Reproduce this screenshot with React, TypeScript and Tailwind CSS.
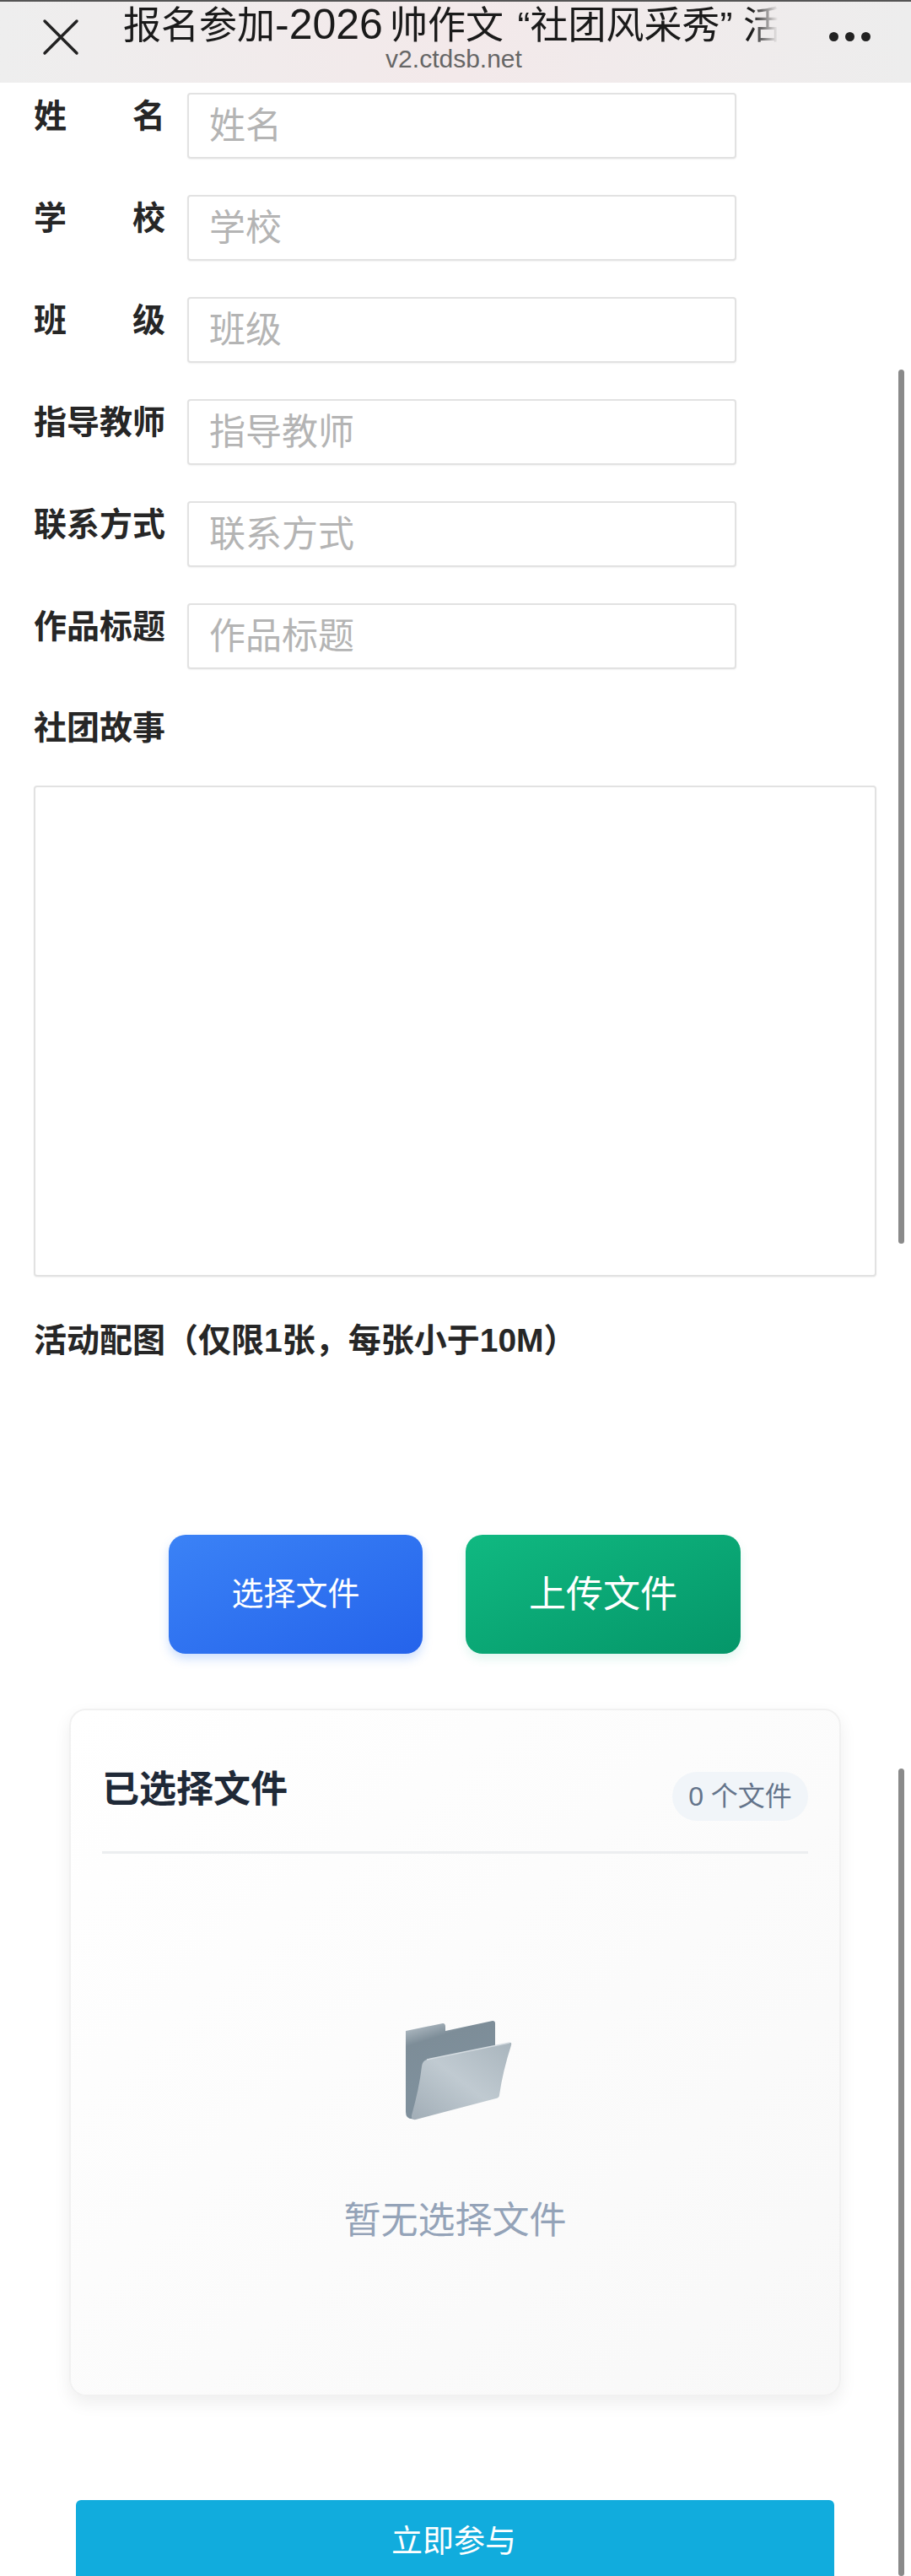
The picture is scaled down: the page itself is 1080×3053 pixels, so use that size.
import React from 'react'

const cjk = { fontFamily: '"Liberation Sans", "Noto Sans CJK SC", sans-serif' }

const fields = [
  { label: ['姓', '名'], placeholder: '姓名' },
  { label: ['学', '校'], placeholder: '学校' },
  { label: ['班', '级'], placeholder: '班级' },
  { label: ['指', '导', '教', '师'], placeholder: '指导教师' },
  { label: ['联', '系', '方', '式'], placeholder: '联系方式' },
  { label: ['作', '品', '标', '题'], placeholder: '作品标题' },
]

const FolderIcon = () => (
  <svg width="127" height="118" viewBox="0 0 127 118" fill="none">
    <defs>
      <linearGradient id="back" x1="0" y1="0" x2="0.2" y2="0.7">
        <stop offset="0" stopColor="#c3ccd3" />
        <stop offset="0.35" stopColor="#7d8d98" />
        <stop offset="1" stopColor="#7f909c" />
      </linearGradient>
      <linearGradient id="front" x1="0" y1="1" x2="1" y2="0">
        <stop offset="0" stopColor="#a1adb6" />
        <stop offset="0.5" stopColor="#c0cad1" />
        <stop offset="1" stopColor="#a9b5bd" />
      </linearGradient>
    </defs>
    <path d="M1 12 L45 3 Q48 3 48 7 L48 12 L104 0 Q107 0 107 3 L107 90 L12 116 Q1 118 1 108 Z" fill="url(#back)" />
    <path d="M26 46 L124 26 Q127 25 126 29 Q116 60 112 88 Q112 91 108 92 L13 117 Q7 118 8 112 Q17 80 20 54 Q21 47 26 46 Z" fill="url(#front)" />
    <path d="M26 46 L124 26" stroke="#d5dce1" strokeWidth="1.5" />
  </svg>
)

const App = () => {
  return (
    <div className="relative h-[3053px] w-[1080px] overflow-hidden bg-white text-[#262626]" style={cjk}>
      <header className="relative flex h-[98px] items-start border-t-2 border-[#555] bg-linear-to-r from-[#eeeeee] via-[#f3e9ea] to-[#ededed]">
        <svg className="ml-[50px] mt-[20px] shrink-0" width="44" height="44" viewBox="0 0 44 44" fill="none" stroke="#222" strokeWidth="3.5" strokeLinecap="round">
          <path d="M3 3 L41 41 M41 3 L3 41" />
        </svg>
        <div className="ml-[52px] flex w-[784px] flex-col items-center">
          <div className="mt-[2px] w-full overflow-hidden whitespace-nowrap text-[45px] leading-[50px] text-[#1a1a1a] [mask-image:linear-gradient(to_right,black_95%,transparent_99%)]">
            报名参加<span className="mr-[8px] text-[50px]">-2026</span>帅作文<span className="ml-[4px]"> “</span>社团风采秀” 活动
          </div>
          <div className="mt-[-3px] text-[30px] leading-[34px] text-[#666666]">v2.ctdsb.net</div>
        </div>
        <div className="ml-[53px] mt-[36px] flex gap-[8px]">
          <span className="h-[11px] w-[11px] rounded-full bg-[#222]" />
          <span className="h-[11px] w-[11px] rounded-full bg-[#222]" />
          <span className="h-[11px] w-[11px] rounded-full bg-[#222]" />
        </div>
      </header>

      <main className="pl-[40px] pr-[40px] pt-[12px]">
        {fields.map((field) => (
          <div key={field.placeholder} className="mb-[43px] flex h-[78px]">
            <label className="flex h-[56px] w-[156px] items-center justify-between text-[39px] font-bold leading-[56px]">
              {field.label.map((ch) => (
                <span key={ch}>{ch}</span>
              ))}
            </label>
            <input
              placeholder={field.placeholder}
              className="ml-[26px] h-[78px] w-[651px] rounded-[4px] border-2 border-[#e2e2e2] bg-white px-[24px] text-[43px] shadow-[0_1px_2px_rgba(0,0,0,0.06)] outline-none placeholder:text-[#b4b4b4]"
              style={cjk}
            />
          </div>
        ))}

        <div className="mt-[-1px] text-[39px] font-bold leading-[56px]">社团故事</div>
        <textarea className="mt-[40px] block h-[582px] w-[999px] resize-none rounded-[4px] border-2 border-[#e2e2e2] bg-white shadow-[0_1px_2px_rgba(0,0,0,0.06)] outline-none" />

        <div className="mt-[48px] text-[39px] font-bold leading-[56px]">活动配图（仅限1张，每张小于10M）</div>

        <div className="mt-[202px] flex pl-[160px]">
          <button className="flex h-[141px] w-[301px] items-center justify-center rounded-[20px] bg-linear-to-br from-[#3b82f6] to-[#2563eb] text-[38px] text-white shadow-[0_6px_12px_rgba(59,130,246,0.25)]">
            选择文件
          </button>
          <button className="ml-[51px] flex h-[141px] w-[326px] items-center justify-center rounded-[20px] bg-linear-to-br from-[#10b981] to-[#059669] text-[44px] text-white shadow-[0_6px_12px_rgba(16,185,129,0.12)]">
            上传文件
          </button>
        </div>

        <section className="ml-[42px] mt-[65px] h-[815px] w-[915px] rounded-[20px] border-2 border-[#f1f1f1] bg-linear-to-br from-white to-[#f8f8f8] px-[37px] shadow-[0_8px_20px_rgba(0,0,0,0.07)]">
          <div className="flex h-[170px] justify-between border-b-[3px] border-[#eceef0] pt-[66px]">
            <h2 className="text-[44px] font-bold leading-[56px] text-[#1f2937]">已选择文件</h2>
            <span className="mt-[7px] flex h-[58px] w-[161px] items-center justify-center rounded-[29px] bg-[#f1f5f9] text-[32px] text-[#64748b]">0 个文件</span>
          </div>
          <div className="flex flex-col items-center pl-[8px] pt-[198px]">
            <FolderIcon />
          </div>
          <p className="mt-[89px] text-center text-[44px] leading-[60px] text-[#94a3b8]">暂无选择文件</p>
        </section>

        <button className="ml-[50px] mt-[123px] flex h-[120px] w-[899px] items-start justify-center rounded-[6px] bg-[#11acdd] pr-[3px] pt-[23px] text-[37px] leading-[54px] text-white">
          立即参与
        </button>
      </main>

      <div className="absolute left-[1065px] top-[438px] h-[1036px] w-[7px] rounded-full bg-[#8a8a8a]" />
      <div className="absolute left-[1065px] top-[2096px] h-[957px] w-[7px] rounded-full bg-[#8a8a8a]" />
    </div>
  )
}

export default App
